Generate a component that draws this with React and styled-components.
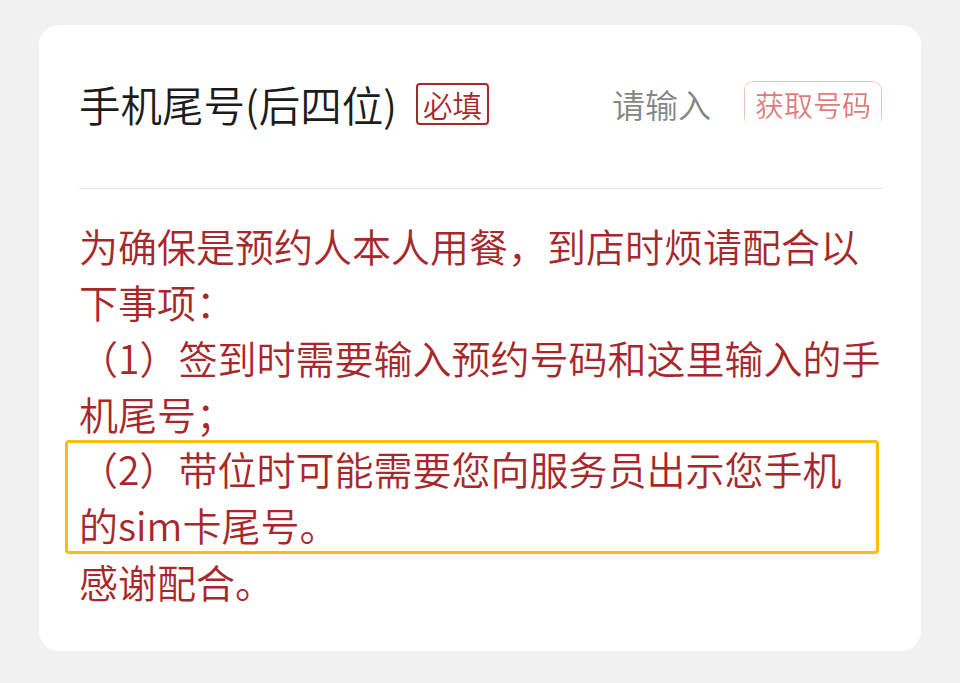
import React from 'react';
import styled, { createGlobalStyle } from 'styled-components';

const GlobalStyle = createGlobalStyle`
  html, body {
    margin: 0;
    padding: 0;
    background: #f1f1f1;
  }
  body {
    font-family: "Noto Sans CJK SC", "Noto Sans", sans-serif;
  }
`;

const Page = styled.div`
  padding: 25px 39px 32px;
`;

const Card = styled.div`
  background: #ffffff;
  border-radius: 20px;
  padding: 0 39px 42px 40px;
`;

const Header = styled.div`
  display: flex;
  align-items: center;
  height: 46px;
  padding: 56px 0 61px;
  border-bottom: 1px solid #e6e6e6;
`;

const Title = styled.h2`
  margin: 0;
  font-size: 41.5px;
  font-weight: 350;
  line-height: 46px;
  color: #1c1c1c;
`;

const Tag = styled.span`
  margin-left: 19px;
  padding: 0 5px;
  height: 38px;
  display: inline-flex;
  align-items: center;
  border: 2px solid #a7282b;
  border-radius: 4px;
  font-size: 29.5px;
  font-weight: 350;
  color: #a7282b;
`;

const Spacer = styled.div`
  flex: 1;
`;

const Placeholder = styled.span`
  font-size: 33px;
  font-weight: 350;
  color: #858585;
  margin-right: 33px;
`;

const CodeButton = styled.button`
  height: 46px;
  padding: 0 10px;
  border: 1.5px solid #f0bcbc;
  border-radius: 9px;
  background: #fff;
  font-family: inherit;
  font-size: 29px;
  font-weight: 350;
  color: #df7a7b;
  display: inline-flex;
  align-items: center;
  -webkit-mask-image: linear-gradient(to bottom, #000 75%, transparent 100%);
  mask-image: linear-gradient(to bottom, #000 75%, transparent 100%);
`;

const Notice = styled.div`
  margin-top: 28px;
  font-size: 39px;
  font-weight: 350;
  line-height: 56px;
  color: #a7282b;
`;

const Line = styled.div`
  white-space: nowrap;
`;

const Highlight = styled.div`
  margin: -1px 3px -1px -14px;
  padding: 0 0 2px 14px;
  outline: 3px solid #fdbd0a;
  outline-offset: -3px;
  border-radius: 4px;
`;

export default function App() {
  return (
    <>
      <GlobalStyle />
      <Page>
        <Card>
          <Header>
            <Title>手机尾号(后四位)</Title>
            <Tag>必填</Tag>
            <Spacer />
            <Placeholder>请输入</Placeholder>
            <CodeButton type="button">获取号码</CodeButton>
          </Header>
          <Notice>
            <Line>为确保是预约人本人用餐，到店时烦请配合以</Line>
            <Line>下事项：</Line>
            <Line>（1）签到时需要输入预约号码和这里输入的手</Line>
            <Line>机尾号；</Line>
            <Highlight>
              <Line>（2）带位时可能需要您向服务员出示您手机</Line>
              <Line>的sim卡尾号。</Line>
            </Highlight>
            <Line>感谢配合。</Line>
          </Notice>
        </Card>
      </Page>
    </>
  );
}
